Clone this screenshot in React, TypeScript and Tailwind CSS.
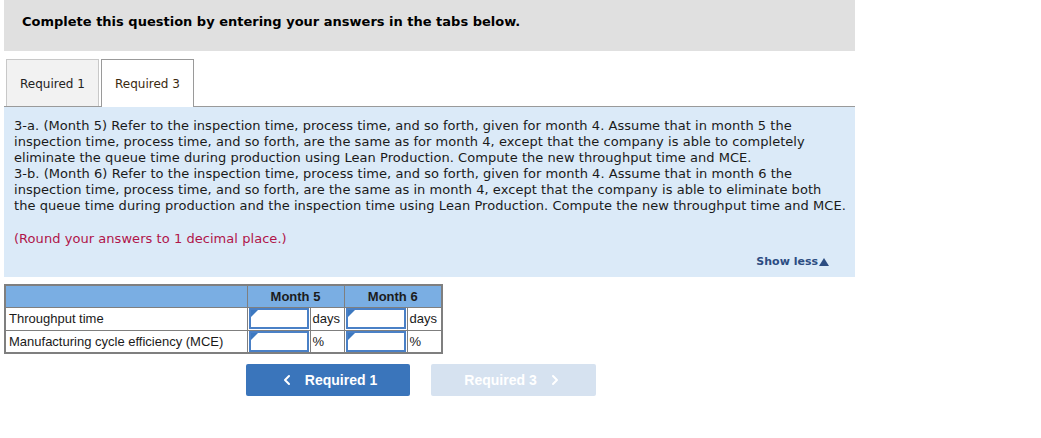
import React from 'react';
import { ChevronLeft, ChevronRight } from 'lucide-react';

const verdana = { fontFamily: '"DejaVu Sans", Verdana, sans-serif' };

const Corner = () => (
  <span className="absolute left-0 top-0 w-0 h-0 border-t-[7px] border-r-[7px] border-t-[#3c78c0] border-r-transparent" />
);

const AnswerCell = () => (
  <td className="relative p-0 border border-[#7f7f7f] w-[63px]">
    <div className="h-[21px] mx-[1px] border-2 border-[#4a80c6] bg-white relative">
      <Corner />
    </div>
  </td>
);

export default function App() {
  const lines = [
    '3-a. (Month 5) Refer to the inspection time, process time, and so forth, given for month 4. Assume that in month 5 the',
    'inspection time, process time, and so forth, are the same as for month 4, except that the company is able to completely',
    'eliminate the queue time during production using Lean Production. Compute the new throughput time and MCE.',
    '3-b. (Month 6) Refer to the inspection time, process time, and so forth, given for month 4. Assume that in month 6 the',
    'inspection time, process time, and so forth, are the same as in month 4, except that the company is able to eliminate both',
    'the queue time during production and the inspection time using Lean Production. Compute the new throughput time and MCE.',
  ];

  return (
    <div className="w-[1041px] h-[438px] bg-white text-[#1a1a1a]" style={verdana}>
      {/* Instruction banner */}
      <div className="ml-[4px] w-[851px] h-[51px] bg-[#e0e0e0] pl-[18px] pt-[9px]">
        <span className="text-[13px] font-bold text-black">Complete this question by entering your answers in the tabs below.</span>
      </div>

      {/* Tabs */}
      <div className="ml-[4px] w-[851px] mt-[8px] flex items-end gap-[2px] pl-[2px] border-b border-[#9a9a9a] h-[48px]">
        <div className="w-[93px] h-[47px] pt-[1px] bg-[#f2f2f2] border border-b-0 border-[#c8c8c8] flex items-center justify-center text-[12px] text-[#222]">
          Required 1
        </div>
        <div className="w-[93px] h-[48px] -mb-px bg-white border border-b-0 border-[#9a9a9a] flex items-center justify-center text-[12px] text-[#3a2a10]">
          Required 3
        </div>
      </div>

      {/* Question panel */}
      <div className="ml-[4px] w-[851px] h-[170px] bg-[#dbeaf8] pl-[10px] pt-[11px] relative">
        <div className="text-[13px] leading-[16px] tracking-[0.05px] text-[#1a1a1a] whitespace-nowrap">
          {lines.map((l) => (
            <div key={l}>{l}</div>
          ))}
        </div>
        <div className="mt-[17px] text-[13px] leading-[16px] tracking-[0.05px] text-[#b0154a]">(Round your answers to 1 decimal place.)</div>
        <div className="absolute right-[26px] bottom-[7px] flex items-center text-[11px] font-bold text-[#2c4d82]">
          Show less
          <span className="ml-[1px] w-0 h-0 border-l-[5px] border-r-[5px] border-b-[8px] border-l-transparent border-r-transparent border-b-[#2c4d82]" />
        </div>
      </div>

      {/* Answer table */}
      <table
        className="ml-[4px] mt-[7px] border-collapse border-2 border-[#7f7f7f] text-[13px] text-[#1a1a1a]"
        style={{ fontFamily: '"Liberation Sans", Arial, sans-serif' }}
      >
        <thead>
          <tr className="bg-[#7aaee3] h-[22px]">
            <th className="w-[242px] border border-[#7f7f7f]" />
            <th colSpan={2} className="border border-[#7f7f7f] font-bold text-[13px] text-[#1c1c1c]">Month 5</th>
            <th colSpan={2} className="border border-[#7f7f7f] font-bold text-[13px] text-[#1c1c1c]">Month 6</th>
          </tr>
        </thead>
        <tbody>
          {[
            ['Throughput time', 'days'],
            ['Manufacturing cycle efficiency (MCE)', '%'],
          ].map(([label, unit]) => (
            <tr key={label} className="h-[23px] bg-white">
              <td className="border border-[#7f7f7f] px-[3px] w-[242px]">{label}</td>
              <AnswerCell />
              <td className="border border-[#7f7f7f] w-[34px] px-[2px]">{unit}</td>
              <AnswerCell />
              <td className="border border-[#7f7f7f] w-[35px] px-[2px]">{unit}</td>
            </tr>
          ))}
        </tbody>
      </table>

      {/* Navigation buttons */}
      <div
        className="ml-[246px] mt-[10px] flex gap-[21px] text-[14px] font-bold"
        style={{ fontFamily: '"Liberation Sans", Arial, sans-serif' }}
      >
        <button className="w-[164px] h-[32px] rounded-[2px] bg-[#3a75bb] text-white flex items-center justify-center gap-[10px]">
          <ChevronLeft className="w-[16px] h-[16px]" strokeWidth={3} />
          Required 1
        </button>
        <button className="w-[165px] h-[32px] rounded-[2px] bg-[#d6e2f0] text-white flex items-center justify-center gap-[10px]">
          Required 3
          <ChevronRight className="w-[16px] h-[16px]" strokeWidth={3} />
        </button>
      </div>
    </div>
  );
}
